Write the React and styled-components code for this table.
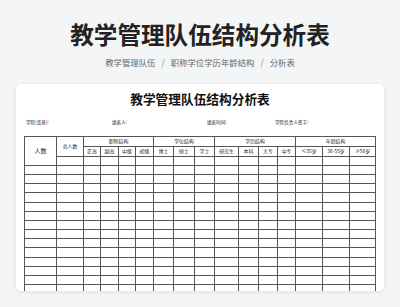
import React from 'react'
import styled, { createGlobalStyle } from 'styled-components'

const GlobalStyle = createGlobalStyle`
    body {
        margin: 0;
        background: #f4f5f7;
        font-family: "Noto Sans CJK SC", "Noto Sans", sans-serif;
    }
`

const Page = styled.div`
    width: 400px;
    height: 307px;
    overflow: hidden;
    padding-top: 20px;
    box-sizing: border-box;
`

const Title = styled.h1`
    margin: 0;
    font-size: 23.6px;
    line-height: 28px;
    font-weight: 700;
    color: #222;
    text-align: center;
`

const Crumbs = styled.div`
    margin-top: 7px;
    display: flex;
    justify-content: center;
    align-items: center;
    gap: 4px;
    font-size: 8.4px;
    line-height: 14px;
    color: #666;
`

const Slash = styled.span`
    margin: 0 2px;
    color: #888;
`

const Card = styled.div`
    margin: 15px 16px 0;
    height: 207px;
    background: #fff;
    border-radius: 5px;
    box-shadow: 0 1px 4px rgba(0, 0, 0, 0.1);
    overflow: hidden;
    padding: 7px 8px 0;
    box-sizing: border-box;
`

const DocTitle = styled.div`
    font-size: 12.7px;
    line-height: 16px;
    font-weight: 700;
    color: #111;
    text-align: center;
`

const InfoRow = styled.div`
    margin-top: 11px;
    display: grid;
    grid-template-columns: 86px 95px 68px 1fr;
    padding-left: 2px;
    font-size: 4.6px;
    line-height: 8px;
    color: #222;
`

const Sheet = styled.table`
    margin-top: 10px;
    width: 352px;
    table-layout: fixed;
    border-collapse: collapse;
    font-size: 4.9px;
    color: #222;
`

const Cell = styled.td`
    border: 1px solid #555;
    height: ${p => p.$h || 8.2}px;
    padding: 0;
    text-align: center;
    vertical-align: middle;
    line-height: 1;
    white-space: nowrap;
    font-size: ${p => (p.$big ? '6px' : 'inherit')};
`

const widths = [32, 27, 17, 18, 17, 18, 20, 21, 20, 24, 20, 19, 18, 27, 27, 26]

const groups = [
    { name: '职称结构', items: ['正高', '副高', '中级', '初级'] },
    { name: '学位结构', items: ['博士', '硕士', '学士'] },
    { name: '学历结构', items: ['研究生', '本科', '大专', '中专'] },
    { name: '年龄结构', items: ['≤35岁', '36-55岁', '≥56岁'] },
]

const App = () => {
    const rows = Array.from({ length: 15 })
    return (
        <React.Fragment>
            <GlobalStyle />
            <Page>
                <Title>教学管理队伍结构分析表</Title>
                <Crumbs>
                    <span>教学管理队伍</span>
                    <Slash>/</Slash>
                    <span>职称学位学历年龄结构</span>
                    <Slash>/</Slash>
                    <span>分析表</span>
                </Crumbs>
                <Card>
                    <DocTitle>教学管理队伍结构分析表</DocTitle>
                    <InfoRow>
                        <span>学院(盖章):</span>
                        <span>填表人:</span>
                        <span>填表时间:</span>
                        <span>学院负责人签字:</span>
                    </InfoRow>
                    <Sheet>
                        <colgroup>
                            {widths.map((w, i) => <col key={i} style={{ width: w }} />)}
                        </colgroup>
                        <tbody>
                            <tr>
                                <Cell rowSpan={3} $big>人数</Cell>
                                <Cell rowSpan={2}>总人数</Cell>
                                {groups.map(g => (
                                    <Cell key={g.name} colSpan={g.items.length} $h={8.8}>{g.name}</Cell>
                                ))}
                            </tr>
                            <tr>
                                {groups.flatMap(g => g.items).map(t => (
                                    <Cell key={t} $h={8.8}>{t}</Cell>
                                ))}
                            </tr>
                            {rows.map((_, r) => (
                                <tr key={r}>
                                    {widths.slice(r === 0 ? 1 : 0).map((_, c) => <Cell key={c} />)}
                                </tr>
                            ))}
                        </tbody>
                    </Sheet>
                </Card>
            </Page>
        </React.Fragment>
    )
}

export default App
